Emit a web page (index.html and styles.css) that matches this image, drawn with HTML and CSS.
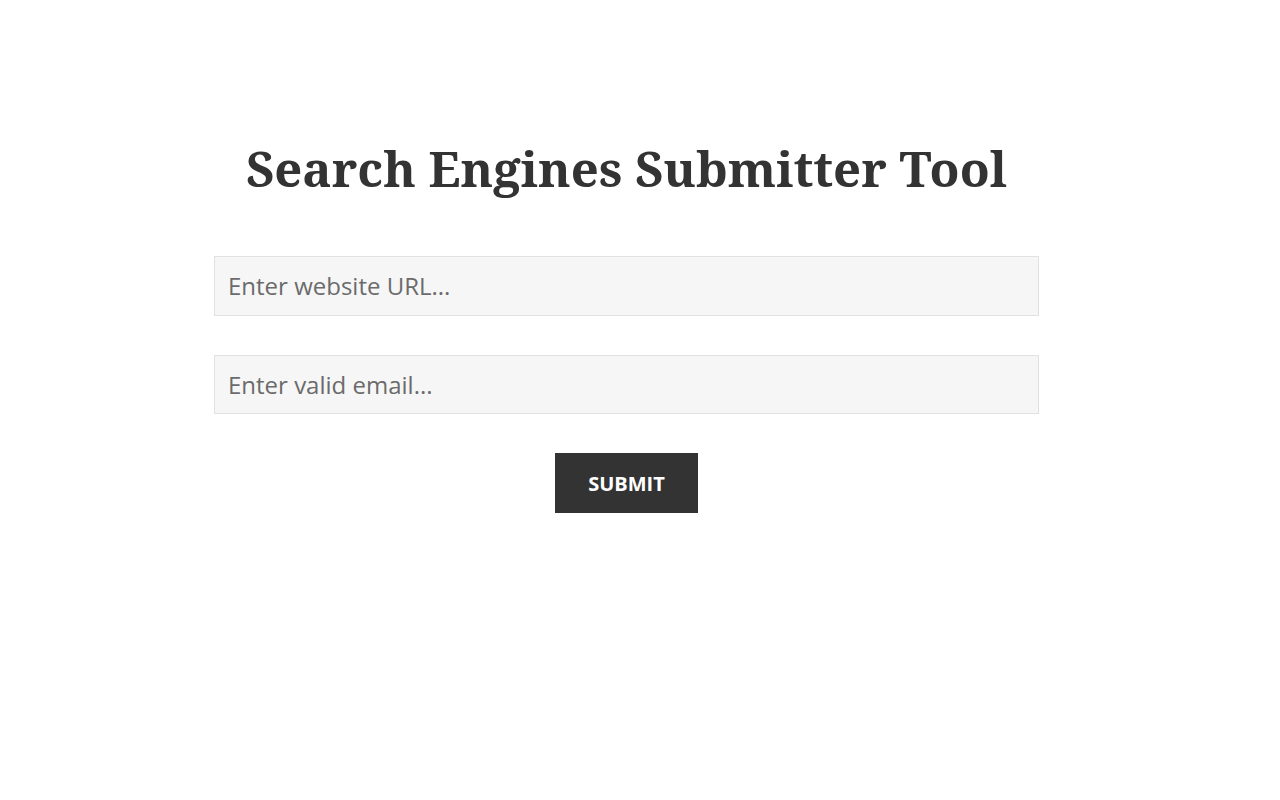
FILE: index.html
```html
<!DOCTYPE html>
<html lang="en">
<head>
<meta charset="utf-8">
<title>Search Engines Submitter Tool</title>
<link rel="stylesheet" href="styles.css">
</head>
<body>
<div class="page">
  <main class="tool">
    <h1 class="title">Search Engines Submitter Tool</h1>
    <form class="form">
      <input class="field" type="text" placeholder="Enter website URL...">
      <input class="field" type="text" placeholder="Enter valid email...">
      <button class="submit" type="button">SUBMIT</button>
    </form>
  </main>
</div>
</body>
</html>
```
FILE: styles.css
```css
html, body {
  margin: 0;
  padding: 0;
  background: #ffffff;
}
.page {
  width: 1253px;
}
.tool {
  width: 825px;
  margin: 0 auto;
  padding-top: 136px;
}
.title {
  margin: 0;
  text-align: center;
  font-family: "Noto Serif", "DejaVu Serif", serif;
  font-weight: 700;
  font-size: 49px;
  line-height: 64px;
  color: #333333;
}
.form {
  margin-top: 56px;
  display: flex;
  flex-direction: column;
  align-items: center;
  gap: 39px;
}
.field {
  box-sizing: border-box;
  width: 825px;
  height: 59.5px;
  margin: 0;
  padding: 0 13px;
  border: 1px solid #e1e1e1;
  background: #f6f6f6;
  font-family: "Open Sans", "Noto Sans", sans-serif;
  font-size: 24px;
  color: #333;
  outline: none;
}
.field::placeholder {
  color: #6b6b6b;
  opacity: 1;
}
.submit {
  box-sizing: border-box;
  width: 143px;
  height: 60px;
  margin: 0;
  border: 0;
  background: #333333;
  color: #ffffff;
  font-family: "Open Sans", "Noto Sans", sans-serif;
  font-weight: 700;
  font-size: 20px;
  cursor: pointer;
}
```
